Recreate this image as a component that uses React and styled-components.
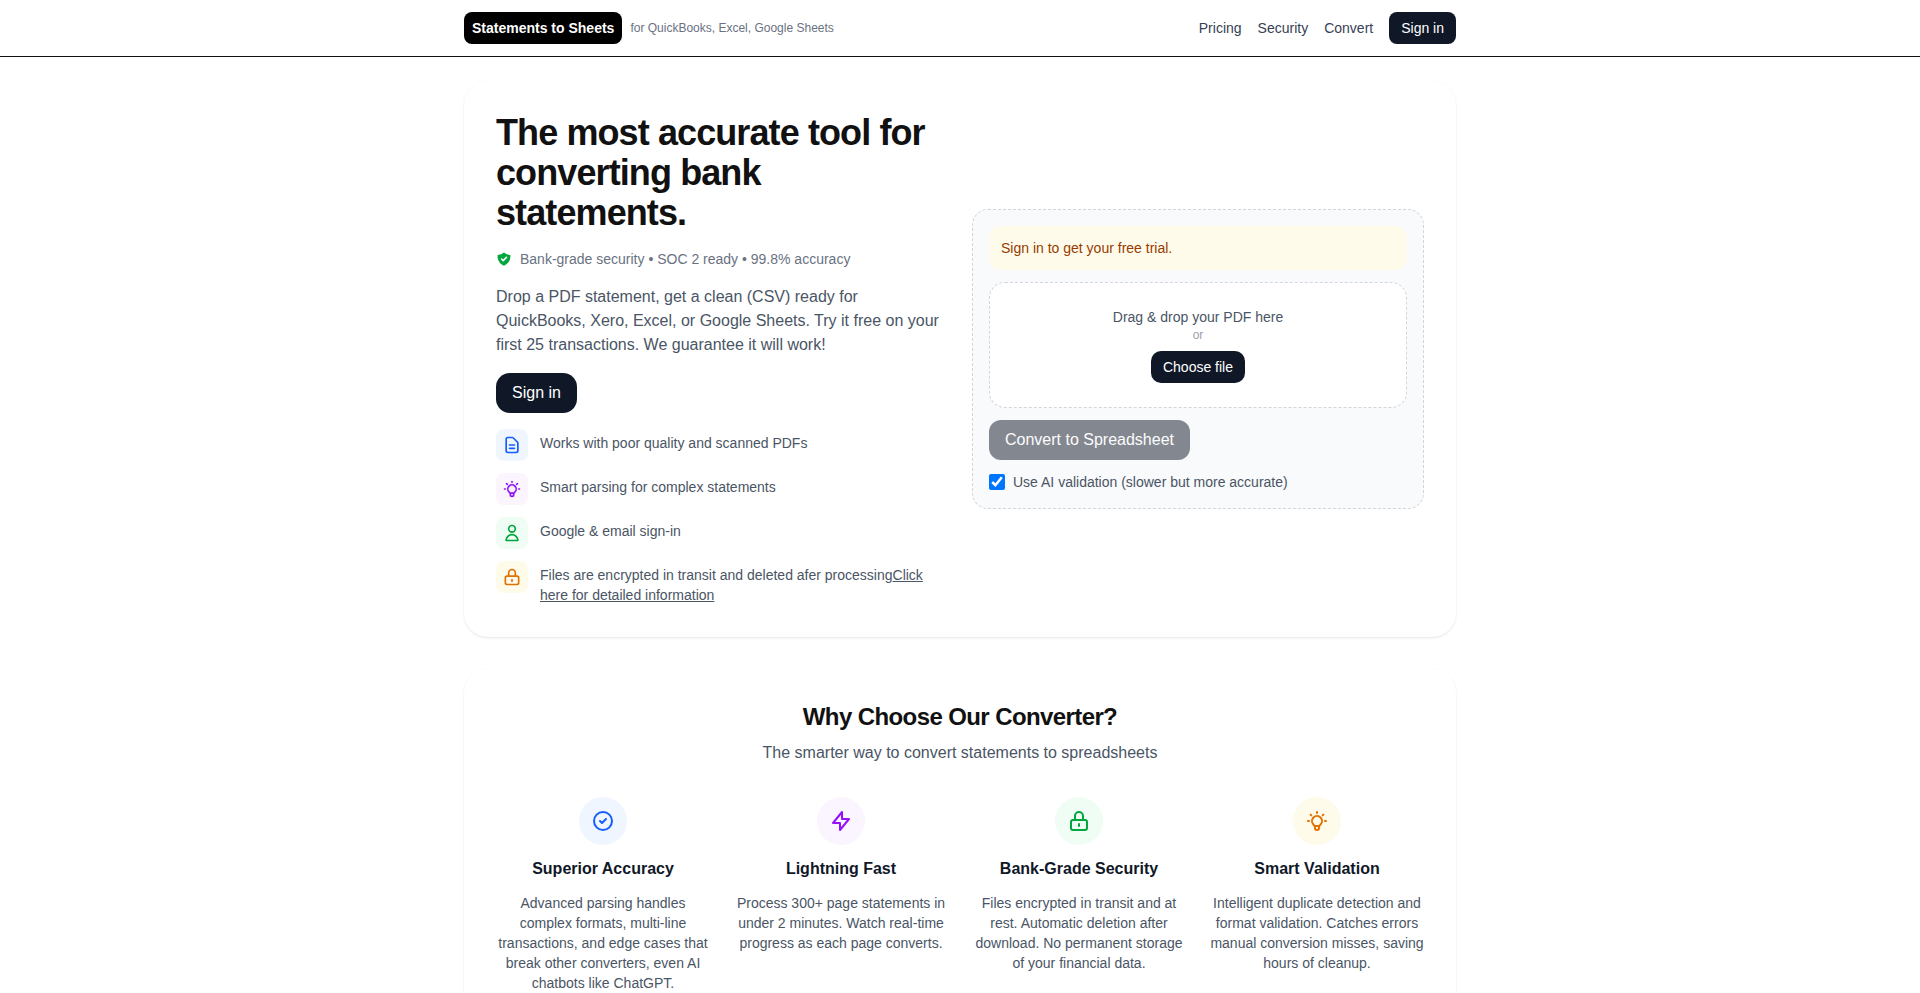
import React from 'react'
import styled, { createGlobalStyle } from 'styled-components'
import {
  HiOutlineDocumentText,
  HiOutlineLightBulb,
  HiOutlineUser,
  HiOutlineLockClosed,
  HiOutlineCheckCircle,
  HiOutlineLightningBolt,
  HiShieldCheck,
} from 'react-icons/hi'

const GlobalStyle = createGlobalStyle`
  * { box-sizing: border-box; }
  html, body { margin: 0; padding: 0; background: #fff; }
  body {
    font-family: "Liberation Sans", Arial, sans-serif;
    color: #101828;
  }
`

const tones = {
  blue: { bg: '#eff6ff', fg: '#155dfc' },
  purple: { bg: '#faf5ff', fg: '#9810fa' },
  green: { bg: '#f0fdf4', fg: '#00a63e' },
  amber: { bg: '#fffbeb', fg: '#e17100' },
}

const features = [
  { tone: 'blue', icon: <HiOutlineDocumentText size={20} />, text: 'Works with poor quality and scanned PDFs' },
  { tone: 'purple', icon: <HiOutlineLightBulb size={20} />, text: 'Smart parsing for complex statements' },
  { tone: 'green', icon: <HiOutlineUser size={20} />, text: 'Google & email sign-in' },
  {
    tone: 'amber',
    icon: <HiOutlineLockClosed size={20} />,
    text: 'Files are encrypted in transit and deleted afer processing',
    link: 'Click here for detailed information',
  },
]

const reasons = [
  {
    tone: 'blue',
    icon: <HiOutlineCheckCircle size={24} />,
    title: 'Superior Accuracy',
    text: 'Advanced parsing handles complex formats, multi-line transactions, and edge cases that break other converters, even AI chatbots like ChatGPT.',
  },
  {
    tone: 'purple',
    icon: <HiOutlineLightningBolt size={24} />,
    title: 'Lightning Fast',
    text: 'Process 300+ page statements in under 2 minutes. Watch real-time progress as each page converts.',
  },
  {
    tone: 'green',
    icon: <HiOutlineLockClosed size={24} />,
    title: 'Bank-Grade Security',
    text: 'Files encrypted in transit and at rest. Automatic deletion after download. No permanent storage of your financial data.',
  },
  {
    tone: 'amber',
    icon: <HiOutlineLightBulb size={24} />,
    title: 'Smart Validation',
    text: 'Intelligent duplicate detection and format validation. Catches errors manual conversion misses, saving hours of cleanup.',
  },
]

export default function App() {
  return (
    <>
      <GlobalStyle />
      <Nav>
        <NavInner>
          <Brand>
            <Logo>Statements to Sheets</Logo>
            <Tagline>for QuickBooks, Excel, Google Sheets</Tagline>
          </Brand>
          <NavLinks>
            <NavLink>Pricing</NavLink>
            <NavLink>Security</NavLink>
            <NavLink>Convert</NavLink>
            <NavButton>Sign in</NavButton>
          </NavLinks>
        </NavInner>
      </Nav>
      <Main>
        <Card>
          <HeroGrid>
            <div>
              <Headline>The most accurate tool for converting bank statements.</Headline>
              <TrustRow>
                <HiShieldCheck size={16} color="#00a63e" />
                <span>Bank-grade security • SOC 2 ready • 99.8% accuracy</span>
              </TrustRow>
              <Lead>
                Drop a PDF statement, get a clean (CSV) ready for QuickBooks, Xero, Excel, or Google Sheets. Try it free on your first 25 transactions. We guarantee it will work!
              </Lead>
              <HeroButton>Sign in</HeroButton>
              <FeatureList>
                {features.map((f) => (
                  <Feature key={f.text}>
                    <FeatureIcon $tone={f.tone}>{f.icon}</FeatureIcon>
                    <FeatureText>
                      {f.text}
                      {f.link && <a>{f.link}</a>}
                    </FeatureText>
                  </Feature>
                ))}
              </FeatureList>
            </div>
            <Panel>
              <Notice>Sign in to get your free trial.</Notice>
              <DropZone>
                <DropText>Drag &amp; drop your PDF here</DropText>
                <DropOr>or</DropOr>
                <ChooseButton>Choose file</ChooseButton>
              </DropZone>
              <ConvertButton disabled>Convert to Spreadsheet</ConvertButton>
              <CheckRow>
                <Check type="checkbox" defaultChecked />
                Use AI validation (slower but more accurate)
              </CheckRow>
            </Panel>
          </HeroGrid>
        </Card>
        <Card>
          <SectionTitle>Why Choose Our Converter?</SectionTitle>
          <SectionSub>The smarter way to convert statements to spreadsheets</SectionSub>
          <ReasonGrid>
            {reasons.map((r) => (
              <Reason key={r.title}>
                <ReasonIcon $tone={r.tone}>{r.icon}</ReasonIcon>
                <ReasonTitle>{r.title}</ReasonTitle>
                <ReasonText>{r.text}</ReasonText>
              </Reason>
            ))}
          </ReasonGrid>
        </Card>
      </Main>
    </>
  )
}

const Nav = styled.header`
  height: 57px;
  border-bottom: 1px solid #111;
  background: #fff;
`

const NavInner = styled.div`
  width: 992px;
  height: 56px;
  margin: 0 auto;
  display: flex;
  align-items: center;
  justify-content: space-between;
`

const Brand = styled.div`
  display: flex;
  align-items: center;
  gap: 8px;
`

const Logo = styled.div`
  height: 32px;
  padding: 0 8px;
  display: flex;
  align-items: center;
  border-radius: 8px;
  background: #000;
  color: #fff;
  font-size: 14px;
  font-weight: 700;
`

const Tagline = styled.span`
  font-size: 12px;
  color: #6a7282;
`

const NavLinks = styled.nav`
  display: flex;
  align-items: center;
  gap: 16px;
`

const NavLink = styled.a`
  font-size: 14px;
  color: #364153;
`

const NavButton = styled.button`
  height: 32px;
  padding: 0 12px;
  border: 0;
  border-radius: 8px;
  background: #101828;
  color: #fff;
  font: inherit;
  font-size: 14px;
`

const Main = styled.main`
  width: 992px;
  margin: 0 auto;
  padding-top: 24px;
  display: flex;
  flex-direction: column;
  gap: 32px;
`

const Card = styled.section`
  padding: 32px;
  border-radius: 24px;
  background: #fff;
  box-shadow: 0 1px 3px rgba(0, 0, 0, 0.08), 0 1px 2px -1px rgba(0, 0, 0, 0.08);
`

const HeroGrid = styled.div`
  display: grid;
  grid-template-columns: 1fr 1fr;
  gap: 24px;
  align-items: center;
`

const Headline = styled.h1`
  margin: 0;
  font-size: 36px;
  line-height: 40px;
  font-weight: 700;
  letter-spacing: -0.9px;
  color: #111;
`

const TrustRow = styled.div`
  margin-top: 16px;
  display: flex;
  align-items: center;
  gap: 8px;
  font-size: 14px;
  line-height: 20px;
  color: #6a7282;
`

const Lead = styled.p`
  margin: 16px 0 0;
  font-size: 16px;
  line-height: 24px;
  color: #4a5565;
`

const HeroButton = styled.button`
  display: block;
  height: 40px;
  margin-top: 16px;
  padding: 0 16px;
  border: 0;
  border-radius: 14px;
  background: #101828;
  color: #fff;
  font: inherit;
  font-size: 16px;
`

const FeatureList = styled.ul`
  list-style: none;
  margin: 16px 0 0;
  padding: 0;
  display: flex;
  flex-direction: column;
  gap: 12px;
`

const Feature = styled.li`
  display: flex;
  align-items: flex-start;
  gap: 12px;
`

const FeatureIcon = styled.span`
  flex: none;
  width: 32px;
  height: 32px;
  display: flex;
  align-items: center;
  justify-content: center;
  border-radius: 8px;
  background: ${(p) => tones[p.$tone].bg};
  color: ${(p) => tones[p.$tone].fg};
`

const FeatureText = styled.div`
  padding-top: 4px;
  font-size: 14px;
  line-height: 20px;
  color: #4a5565;
  a {
    text-decoration: underline;
  }
`

const Panel = styled.div`
  padding: 16px;
  border: 1px dashed #d1d5dc;
  border-radius: 16px;
  background: #f9fafb;
  display: flex;
  flex-direction: column;
  align-items: flex-start;
  gap: 12px;
`

const Notice = styled.div`
  width: 100%;
  padding: 12px;
  border-radius: 12px;
  background: #fffbeb;
  color: #973c00;
  font-size: 14px;
  line-height: 20px;
`

const DropZone = styled.div`
  width: 100%;
  padding: 24px;
  border: 1px dashed #d1d5dc;
  border-radius: 16px;
  background: #fff;
  display: flex;
  flex-direction: column;
  align-items: center;
`

const DropText = styled.div`
  font-size: 14px;
  line-height: 20px;
  color: #4a5565;
`

const DropOr = styled.div`
  font-size: 12px;
  line-height: 16px;
  color: #99a1af;
`

const ChooseButton = styled.button`
  height: 32px;
  margin-top: 8px;
  padding: 0 12px;
  border: 0;
  border-radius: 10px;
  background: #101828;
  color: #fff;
  font: inherit;
  font-size: 14px;
`

const ConvertButton = styled.button`
  height: 40px;
  padding: 0 16px;
  border: 0;
  border-radius: 12px;
  background: #101828;
  color: #fff;
  font: inherit;
  font-size: 16px;
  opacity: 0.5;
`

const CheckRow = styled.label`
  display: flex;
  align-items: center;
  gap: 8px;
  font-size: 14px;
  line-height: 20px;
  color: #4a5565;
`

const Check = styled.input`
  width: 16px;
  height: 16px;
  margin: 0;
`

const SectionTitle = styled.h2`
  margin: 0;
  text-align: center;
  font-size: 24px;
  line-height: 32px;
  font-weight: 700;
  letter-spacing: -0.6px;
  color: #111;
`

const SectionSub = styled.p`
  margin: 8px 0 0;
  text-align: center;
  font-size: 16px;
  line-height: 24px;
  color: #4a5565;
`

const ReasonGrid = styled.div`
  margin-top: 32px;
  display: grid;
  grid-template-columns: repeat(4, 1fr);
  gap: 24px;
`

const Reason = styled.div`
  display: flex;
  flex-direction: column;
  align-items: center;
  text-align: center;
`

const ReasonIcon = styled.span`
  width: 48px;
  height: 48px;
  display: flex;
  align-items: center;
  justify-content: center;
  border-radius: 50%;
  background: ${(p) => tones[p.$tone].bg};
  color: ${(p) => tones[p.$tone].fg};
`

const ReasonTitle = styled.h3`
  margin: 12px 0 0;
  font-size: 16px;
  line-height: 24px;
  font-weight: 700;
  color: #101828;
`

const ReasonText = styled.p`
  margin: 12px 0 0;
  font-size: 14px;
  line-height: 20px;
  color: #4a5565;
`
